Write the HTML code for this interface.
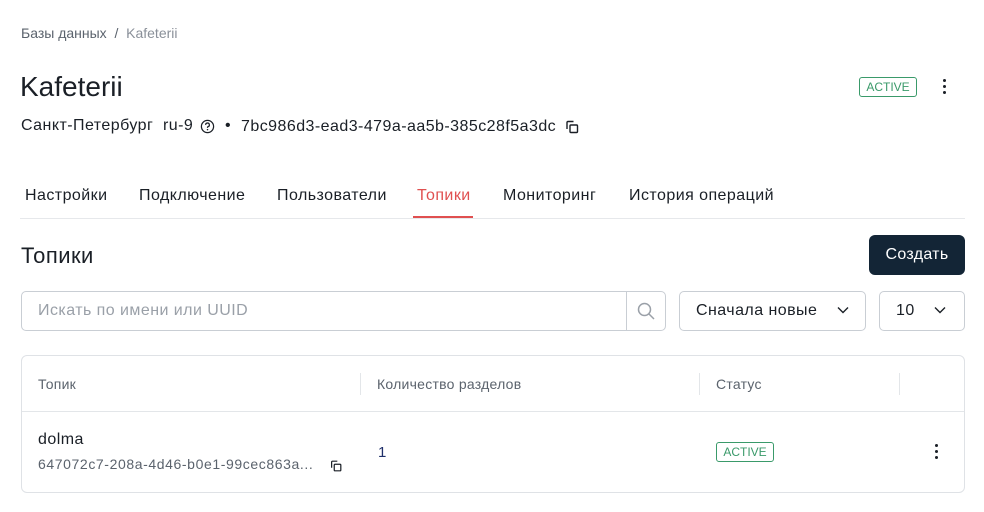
<!DOCTYPE html>
<html><head><meta charset="utf-8"><style>
*{box-sizing:border-box;margin:0;padding:0}
body{width:984px;height:512px;background:#fff;font-family:"Liberation Sans",sans-serif;color:#1a1f26;position:relative;overflow:hidden}
.a{position:absolute;white-space:nowrap}
.s{letter-spacing:.45px}
.badge{border:1px solid #3a9a6a;color:#3a9a6a;border-radius:3px;font-size:12px;text-align:center}
.dots{width:3px}
.dots i{display:block;width:3px;height:3px;background:#1a1f26;border-radius:50%;margin-bottom:3px}
.box{border:1px solid #c9ced4;border-radius:5px}
</style></head><body>
<div class="a" style="left:21px;top:25px;font-size:14px;color:#5b636d">Базы данных &nbsp;/&nbsp; <span style="color:#8a9099">Kafeterii</span></div>
<div class="a" style="left:20px;top:71px;font-size:28px">Kafeterii</div>
<div class="a s" style="left:21px;top:117px;font-size:16px">Санкт-Петербург &nbsp;ru-9</div>
<svg class="a" style="left:200px;top:119px" width="15" height="15" viewBox="0 0 16 16"><circle cx="8" cy="8" r="6.5" fill="none" stroke="#1a1f26" stroke-width="1.3"/><path d="M6 6.3a2 2 0 1 1 2.5 1.9c-.4.2-.5.5-.5.9v.4" fill="none" stroke="#1a1f26" stroke-width="1.3"/><circle cx="8" cy="11.3" r=".8" fill="#1a1f26"/></svg>
<div class="a" style="left:225px;top:117px;font-size:16px">•</div>
<div class="a s" style="left:241px;top:118px;font-size:16px">7bc986d3-ead3-479a-aa5b-385c28f5a3dc</div>
<svg class="a" style="left:564px;top:119px" width="16" height="16" viewBox="0 0 16 16" fill="none" stroke="#1a1f26" stroke-width="1.4"><path d="M3 10V3.5A1 1 0 0 1 4 2.5h5.5"/><rect x="6" y="6" width="7.5" height="7.5" rx="1"/></svg>
<div class="a badge" style="left:859px;top:77px;width:58px;height:20px;line-height:18px">ACTIVE</div>
<div class="a dots" style="left:943px;top:79px"><i></i><i></i><i></i></div>
<div class="a s" style="left:25px;top:187px;font-size:16px">Настройки</div>
<div class="a s" style="left:139px;top:187px;font-size:16px">Подключение</div>
<div class="a s" style="left:277px;top:187px;font-size:16px">Пользователи</div>
<div class="a s" style="left:417px;top:187px;font-size:16px;color:#e05050">Топики</div>
<div class="a s" style="left:503px;top:187px;font-size:16px">Мониторинг</div>
<div class="a s" style="left:629px;top:187px;font-size:16px">История операций</div>
<div class="a" style="left:20px;top:218px;width:945px;height:1px;background:#e6e8eb"></div>
<div class="a" style="left:413px;top:216px;width:60px;height:2px;background:#e05050"></div>
<div class="a s" style="left:21px;top:243px;font-size:22px">Топики</div>
<div class="a" style="left:869px;top:235px;width:96px;height:40px;background:#132536;border-radius:6px;color:#fff;font-size:16px;line-height:40px;text-align:center;letter-spacing:.3px">Создать</div>
<div class="a box" style="left:21px;top:291px;width:645px;height:40px"></div>
<div class="a" style="left:626px;top:292px;width:1px;height:38px;background:#c9ced4"></div>
<div class="a s" style="left:38px;top:302px;font-size:16px;color:#9aa0a8">Искать по имени или UUID</div>
<svg class="a" style="left:636px;top:301px" width="20" height="20" viewBox="0 0 20 20" fill="none" stroke="#9aa0a8" stroke-width="1.5"><circle cx="8.5" cy="8.5" r="6"/><path d="M13 13l5 5"/></svg>
<div class="a box" style="left:679px;top:291px;width:187px;height:40px"></div>
<div class="a s" style="left:696px;top:302px;font-size:16px">Сначала новые</div>
<svg class="a" style="left:836px;top:305px" width="14" height="10" viewBox="0 0 14 10" fill="none" stroke="#1a1f26" stroke-width="1.4"><path d="M2 2.5l5 5 5-5"/></svg>
<div class="a box" style="left:879px;top:291px;width:86px;height:40px"></div>
<div class="a s" style="left:896px;top:302px;font-size:16px">10</div>
<svg class="a" style="left:933px;top:305px" width="14" height="10" viewBox="0 0 14 10" fill="none" stroke="#1a1f26" stroke-width="1.4"><path d="M2 2.5l5 5 5-5"/></svg>
<div class="a" style="left:21px;top:355px;width:944px;height:138px;border:1px solid #dfe2e6;border-radius:6px"></div>
<div class="a" style="left:22px;top:411px;width:942px;height:1px;background:#e3e6e9"></div>
<div class="a" style="left:360px;top:373px;width:1px;height:22px;background:#e3e6e9"></div>
<div class="a" style="left:699px;top:373px;width:1px;height:22px;background:#e3e6e9"></div>
<div class="a" style="left:899px;top:373px;width:1px;height:22px;background:#e3e6e9"></div>
<div class="a" style="left:38px;top:376px;font-size:14px;color:#5b636d;letter-spacing:.25px">Топик</div>
<div class="a" style="left:377px;top:376px;font-size:14px;color:#5b636d;letter-spacing:.25px">Количество разделов</div>
<div class="a" style="left:716px;top:376px;font-size:14px;color:#5b636d;letter-spacing:.25px">Статус</div>
<div class="a s" style="left:38px;top:431px;font-size:16px">dolma</div>
<div class="a" style="left:38px;top:456px;font-size:14px;color:#5b636d;letter-spacing:.6px">647072c7-208a-4d46-b0e1-99cec863a...</div>
<svg class="a" style="left:329px;top:459px" width="14" height="14" viewBox="0 0 16 16" fill="none" stroke="#1a1f26" stroke-width="1.4"><path d="M3 10V3.5A1 1 0 0 1 4 2.5h5.5"/><rect x="6" y="6" width="7.5" height="7.5" rx="1"/></svg>
<div class="a" style="left:378px;top:444px;font-size:15px;color:#1f2f6a">1</div>
<div class="a badge" style="left:716px;top:442px;width:58px;height:20px;line-height:18px">ACTIVE</div>
<div class="a dots" style="left:935px;top:444px"><i></i><i></i><i></i></div>
</body></html>
